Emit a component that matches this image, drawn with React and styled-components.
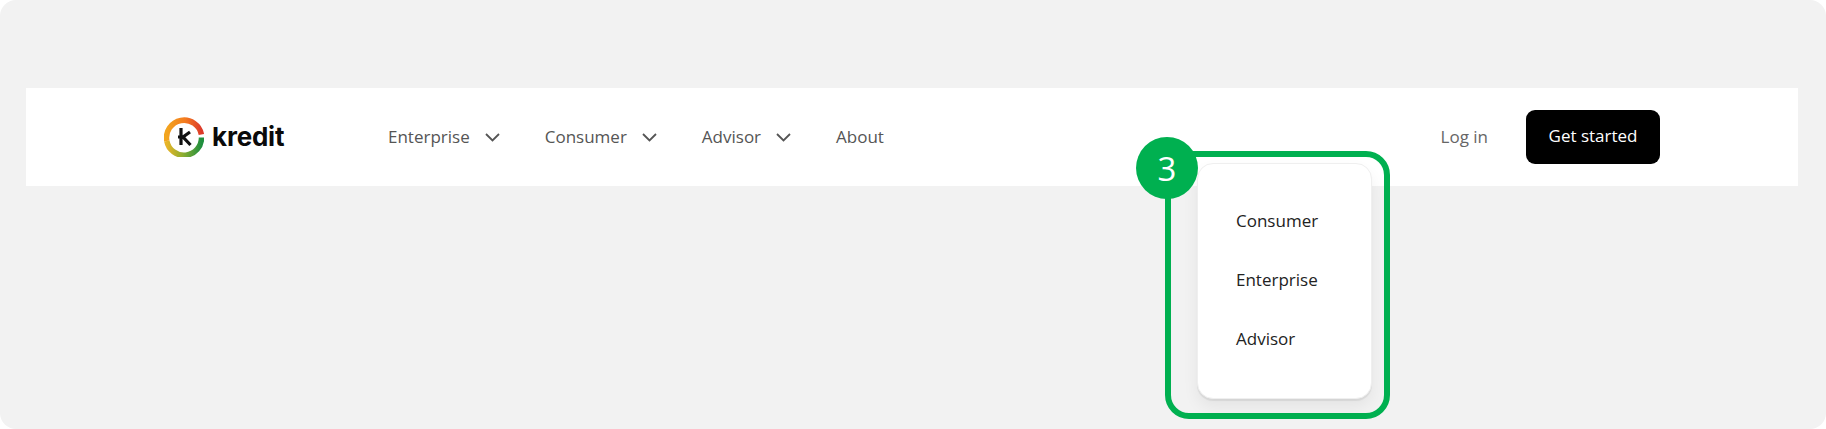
import React from "react";
import styled, { createGlobalStyle } from "styled-components";

const Global = createGlobalStyle`
  html, body { margin: 0; padding: 0; background: #fff; }
  body { font-family: "Open Sans", "Noto Sans", sans-serif; }
`;
const Page = styled.div`
  position: relative; width: 1826px; height: 429px; box-sizing: border-box;
  padding: 88px 28px 0 26px; background: #f2f2f2; border-radius: 16px; overflow: hidden;
`;
const Header = styled.header`
  height: 98px; background: #fff; display: flex; align-items: center;
  padding: 0 138px 0 138px;
`;
const Brand = styled.div`display: flex; align-items: center; gap: 8px; width: 224px;`;
const BrandName = styled.span`
  font-family: Inter, sans-serif; font-weight: 700; font-size: 26px; line-height: 30px;
  letter-spacing: -0.2px; color: #0a0a0a;
`;
const Nav = styled.nav`display: flex; align-items: center; flex: 1; margin-top: -2px;`;
const NavItem = styled.a`
  display: flex; align-items: center; gap: 15px; margin-right: 45px;
  font-size: 17px; line-height: 23px; color: #555;
`;
const LogIn = styled.a`font-size: 17px; line-height: 23px; color: #666; margin-right: 38px; margin-top: -2px;`;
const Cta = styled.button`
  width: 134px; height: 54px; border: 0; border-radius: 9px; background: #000; color: #fff;
  font: 17px "Open Sans", sans-serif; padding: 0 0 3px;
`;
const Card = styled.div`
  position: absolute; left: 1197px; top: 163px; width: 175px; height: 236px;
  box-sizing: border-box; padding: 45px 0 0 38px; background: #fff; border-radius: 16px;
  border: 1px solid #efefef;
  box-shadow: 0 2px 1px rgba(0,0,0,.07), 0 8px 16px rgba(0,0,0,.06);
  display: flex; flex-direction: column; gap: 36px;
`;
const CardItem = styled.div`font-size: 17px; line-height: 23px; color: #222;`;
const Frame = styled.div`
  position: absolute; left: 1165px; top: 151px; width: 225px; height: 268px;
  box-sizing: border-box; border: 6px solid #00b050; border-radius: 24px;
`;
const Badge = styled.div`
  position: absolute; left: 1136px; top: 137px; width: 62px; height: 62px; border-radius: 50%;
  background: #00b050; color: #fff; display: flex; align-items: center; justify-content: center;
  font-size: 33px;
`;
const ChevIcon = styled.svg`margin-top: 3px;`;
const Chev = () => (
  <ChevIcon width="15" height="9" viewBox="0 0 15 9" fill="none" stroke="#555" strokeWidth="1.8">
    <path d="M1 1 L7.5 7.5 L14 1" />
  </ChevIcon>
);
const Logo = () => (
  <svg width="40" height="40" viewBox="0 0 40 40" fill="none">
    <defs>
      <linearGradient id="a" x1="0" y1="0" x2="1" y2="0">
        <stop offset="0" stopColor="#f2a51f" /><stop offset=".55" stopColor="#f47a1f" /><stop offset="1" stopColor="#dc3a2a" />
      </linearGradient>
      <linearGradient id="b" x1="0" y1="0" x2="1" y2="0">
        <stop offset="0" stopColor="#e8b428" /><stop offset=".45" stopColor="#8fae30" /><stop offset="1" stopColor="#1f8f3f" />
      </linearGradient>
    </defs>
    <path d="M2.8 24 A17.5 17.5 0 0 1 37.4 17.5" stroke="url(#a)" strokeWidth="5.5" />
    <path d="M2.8 24 A17.5 17.5 0 0 0 37.5 20.5" stroke="url(#b)" strokeWidth="5.5" />
    <path d="M17 11 V28 M26 15 L19 20 L26.5 28 M14 20 H19" stroke="#111" strokeWidth="3.2" />
  </svg>
);

export default function App() {
  return (
    <>
      <Global />
      <Page>
        <Header>
          <Brand><Logo /><BrandName>kredit</BrandName></Brand>
          <Nav>
            <NavItem>Enterprise <Chev /></NavItem>
            <NavItem>Consumer <Chev /></NavItem>
            <NavItem>Advisor <Chev /></NavItem>
            <NavItem>About</NavItem>
          </Nav>
          <LogIn>Log in</LogIn>
          <Cta>Get started</Cta>
        </Header>
        <Frame />
        <Card>
          <CardItem>Consumer</CardItem>
          <CardItem>Enterprise</CardItem>
          <CardItem>Advisor</CardItem>
        </Card>
        <Badge>3</Badge>
      </Page>
    </>
  );
}
